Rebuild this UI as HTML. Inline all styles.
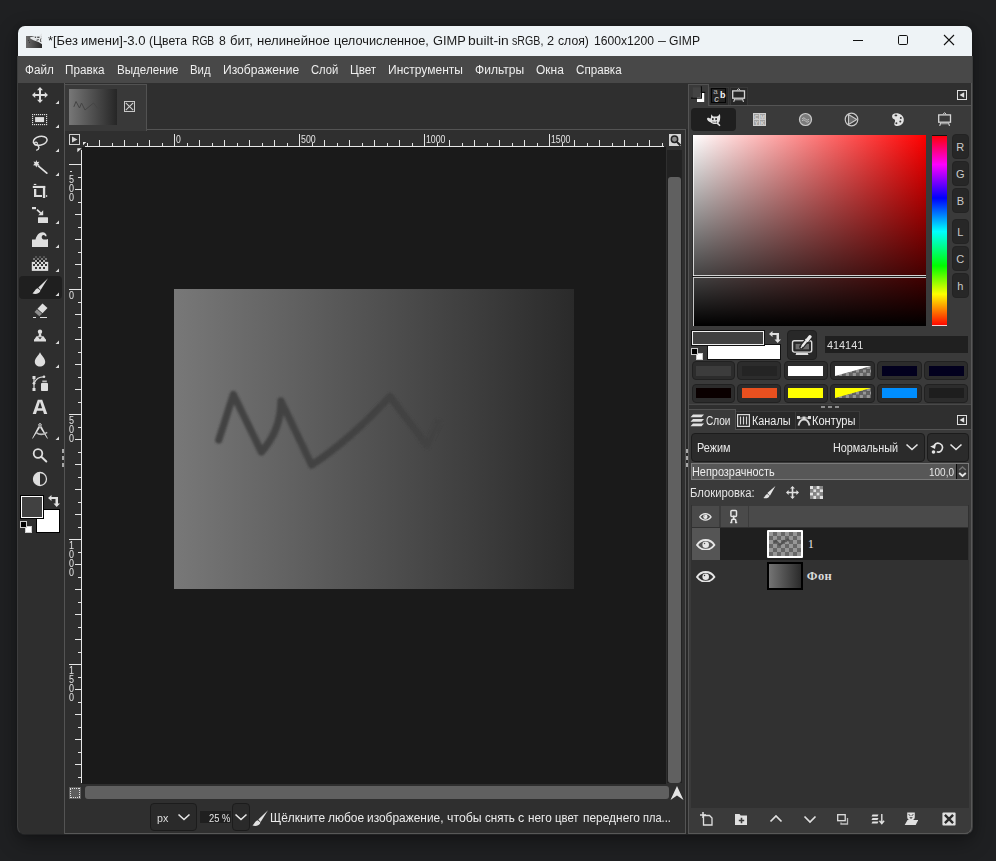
<!DOCTYPE html>
<html><head><meta charset="utf-8"><title>GIMP</title>
<style>
*{box-sizing:border-box;margin:0;padding:0}
html,body{width:996px;height:861px;overflow:hidden;background:#1f2022;font-family:"Liberation Sans",sans-serif;}
.abs,.t{position:absolute}
.t{white-space:nowrap;line-height:20px;height:20px}
#win{position:absolute;left:18px;top:26px;width:954px;height:808px;border-radius:7px;overflow:hidden;background:#303030;
 }
#shadow{position:absolute;left:18px;top:26px;width:954px;height:808px;border-radius:7px;box-shadow:0 7px 20px 2px rgba(0,0,0,.32),0 0 6px rgba(0,0,0,.22);}
#root{position:absolute;left:0;top:0;width:996px;height:861px}
#inner{position:absolute;left:-18px;top:-26px;width:996px;height:861px}
</style></head><body>
<div id="shadow"></div>
<div id="win"><div id="inner">

<div class="abs" style="left:18px;top:26px;width:954px;height:30px;background:#eef3f6"></div>
<div class="abs" style="left:18px;top:56px;width:954px;height:27px;background:#484848"></div>
<div class="abs" style="left:18px;top:83px;width:47px;height:751px;background:#2e2e2e"></div>
<div class="abs" style="left:64px;top:83px;width:1px;height:751px;background:#545454"></div>
<span class="t" style="left:47.90px;top:30.50px;font-size:12.5px;color:#1a1a1a;transform:scaleX(1.0329);transform-origin:0 50%;">*[Без</span>
<span class="t" style="left:81.10px;top:30.50px;font-size:12.5px;color:#1a1a1a;transform:scaleX(1.0500);transform-origin:0 50%;">имени]-3.0</span>
<span class="t" style="left:149.40px;top:30.50px;font-size:12.5px;color:#1a1a1a;transform:scaleX(0.9773);transform-origin:0 50%;">(Цвета</span>
<span class="t" style="left:192.30px;top:30.50px;font-size:12.5px;color:#1a1a1a;transform:scaleX(0.8196);transform-origin:0 50%;">RGB</span>
<span class="t" style="left:219.30px;top:30.50px;font-size:12.5px;color:#1a1a1a;transform:scaleX(0.9781);transform-origin:0 50%;">8</span>
<span class="t" style="left:229.80px;top:30.50px;font-size:12.5px;color:#1a1a1a;transform:scaleX(1.0431);transform-origin:0 50%;">бит,</span>
<span class="t" style="left:256.70px;top:30.50px;font-size:12.5px;color:#1a1a1a;transform:scaleX(1.0496);transform-origin:0 50%;">нелинейное</span>
<span class="t" style="left:333.50px;top:30.50px;font-size:12.5px;color:#1a1a1a;transform:scaleX(1.0222);transform-origin:0 50%;">целочисленное,</span>
<span class="t" style="left:432.60px;top:30.50px;font-size:12.5px;color:#1a1a1a;transform:scaleX(1.0267);transform-origin:0 50%;">GIMP</span>
<span class="t" style="left:467.70px;top:30.50px;font-size:12.5px;color:#1a1a1a;transform:scaleX(1.1080);transform-origin:0 50%;">built-in</span>
<span class="t" style="left:511.90px;top:30.50px;font-size:12.5px;color:#1a1a1a;transform:scaleX(0.8530);transform-origin:0 50%;">sRGB,</span>
<span class="t" style="left:547.30px;top:30.50px;font-size:12.5px;color:#1a1a1a;transform:scaleX(1.0213);transform-origin:0 50%;">2</span>
<span class="t" style="left:558.30px;top:30.50px;font-size:12.5px;color:#1a1a1a;transform:scaleX(0.9789);transform-origin:0 50%;">слоя)</span>
<span class="t" style="left:594.30px;top:30.50px;font-size:12.5px;color:#1a1a1a;transform:scaleX(0.9715);transform-origin:0 50%;">1600x1200</span>
<span class="t" style="left:657.80px;top:30.50px;font-size:12.5px;color:#1a1a1a;transform:scaleX(1.1364);transform-origin:0 50%;">–</span>
<span class="t" style="left:668.90px;top:30.50px;font-size:12.5px;color:#1a1a1a;transform:scaleX(0.9704);transform-origin:0 50%;">GIMP</span>
<svg class="abs" style="left:26px;top:33px" width="17" height="16" viewBox="0 0 17 16"><defs><linearGradient id="ig" x1="0" y1="0" x2="1" y2="0"><stop offset="0" stop-color="#6c6c6c"/><stop offset="1" stop-color="#2a2a2a"/></linearGradient></defs><rect x="0" y="3" width="16" height="12" fill="url(#ig)"/><path d="M3.800 4.400L8.800 3.100 13 3 15.800 .3 16 6V11.200L12.500 9 7.500 7.300 4.600 5.800z" fill="#e3e6e8"/><rect x="8.800" y="3.700" width="1.300" height="1.100" fill="#2a2a2a"/><rect x="11.200" y="3.700" width="2.300" height="1.100" fill="#2a2a2a"/><path d="M10.500 7.200l2.300-.6M15 5.500c-.8 1.200-.8 2.500 0 3.500" stroke="#2a2a2a" stroke-width=".9" fill="none"/><circle cx="2.500" cy="7.200" r=".5" fill="#2a2a2a"/><circle cx="3.500" cy="9.200" r=".5" fill="#2a2a2a"/></svg>
<svg class="abs" style="left:848px;top:30px" width="112" height="22" viewBox="0 0 112 22"><path d="M5 10.5h10" stroke="#111" stroke-width="1" fill="none"/><rect x="50.5" y="5.5" width="9" height="9" rx="1.2" stroke="#111" stroke-width="1" fill="none"/><path d="M96 5l10 10M106 5l-10 10" stroke="#111" stroke-width="1.1" fill="none"/></svg>
<span class="t" style="left:24.80px;top:60.00px;font-size:12.5px;color:#eeeeee;transform:scaleX(0.9372);transform-origin:0 50%;">Файл</span>
<span class="t" style="left:65.40px;top:60.00px;font-size:12.5px;color:#eeeeee;transform:scaleX(0.9379);transform-origin:0 50%;">Правка</span>
<span class="t" style="left:117.00px;top:60.00px;font-size:12.5px;color:#eeeeee;transform:scaleX(0.9285);transform-origin:0 50%;">Выделение</span>
<span class="t" style="left:190.20px;top:60.00px;font-size:12.5px;color:#eeeeee;transform:scaleX(0.9110);transform-origin:0 50%;">Вид</span>
<span class="t" style="left:223.30px;top:60.00px;font-size:12.5px;color:#eeeeee;transform:scaleX(0.9677);transform-origin:0 50%;">Изображение</span>
<span class="t" style="left:311.10px;top:60.00px;font-size:12.5px;color:#eeeeee;transform:scaleX(0.8982);transform-origin:0 50%;">Слой</span>
<span class="t" style="left:350.00px;top:60.00px;font-size:12.5px;color:#eeeeee;transform:scaleX(0.9354);transform-origin:0 50%;">Цвет</span>
<span class="t" style="left:388.30px;top:60.00px;font-size:12.5px;color:#eeeeee;transform:scaleX(0.9610);transform-origin:0 50%;">Инструменты</span>
<span class="t" style="left:475.10px;top:60.00px;font-size:12.5px;color:#eeeeee;transform:scaleX(0.9651);transform-origin:0 50%;">Фильтры</span>
<span class="t" style="left:536.20px;top:60.00px;font-size:12.5px;color:#eeeeee;transform:scaleX(0.9571);transform-origin:0 50%;">Окна</span>
<span class="t" style="left:575.80px;top:60.00px;font-size:12.5px;color:#eeeeee;transform:scaleX(0.9320);transform-origin:0 50%;">Справка</span>
<div class="abs" style="left:65px;top:83px;width:621px;height:751px;background:#2f2f2f"></div>
<div class="abs" style="left:146px;top:129px;width:540px;height:1px;background:#545454"></div>
<div class="abs" style="left:685px;top:129px;width:1px;height:705px;background:#545454"></div>
<div class="abs" style="left:65px;top:84px;width:82px;height:47px;background:#393939;border:1px solid #525252;border-bottom:none;border-left:none"></div>
<div class="abs" style="left:69px;top:89px;width:48px;height:36px;background:linear-gradient(90deg,#777 0%,#262626 100%)"></div>
<svg class="abs" style="left:69px;top:89px" width="48" height="36" viewBox="0 0 48 36"><path d="M5 17.5l2-5 3.5 6.5 2-5 3.5 7 8.5-7 4 5" stroke="#444" stroke-width="1" fill="none" stroke-linejoin="round" stroke-linecap="round"/></svg>
<svg class="abs" style="left:123px;top:100px" width="13" height="13" viewBox="0 0 13 13"><rect x="1.5" y="1.5" width="10" height="10" fill="none" stroke="#c8c8c8" stroke-width="1"/><path d="M2.800 2.800l7.400 7.400M10.200 2.800l-7.400 7.400" stroke="#d0d0d0" stroke-width="1.100" fill="none"/></svg>
<div class="abs" style="left:82px;top:147px;width:584px;height:637px;background:#1a1a1a"></div>
<div class="abs" style="left:174px;top:289px;width:400px;height:300px;background:linear-gradient(90deg,#787878 0%,#2a2a2a 100%)"></div>
<svg class="abs" style="left:174px;top:289px" width="400" height="300" viewBox="0 0 400 300"><defs><filter id="bl" x="-10%" y="-10%" width="120%" height="120%"><feGaussianBlur stdDeviation="1.3"/></filter></defs><path d="M44.800 151 L59.400 105.500 L87.400 163 Q107 141 107 112 L137.700 176 Q176 151 216 107.500 L253 156.500 L264 134" stroke="#434343" stroke-width="7.300" fill="none" stroke-linejoin="round" stroke-linecap="round" filter="url(#bl)"/></svg>
<svg class="abs" style="left:65px;top:130px" width="622" height="18" viewBox="65 130 622 18" shape-rendering="crispEdges"><rect x="85" y="146" width="579" height="1" fill="#e6e6e6"/><rect x="87" y="143" width="1" height="3" fill="#e6e6e6"/><rect x="99" y="140" width="1" height="6" fill="#e6e6e6"/><rect x="112" y="143" width="1" height="3" fill="#e6e6e6"/><rect x="124" y="140" width="1" height="6" fill="#e6e6e6"/><rect x="137" y="143" width="1" height="3" fill="#e6e6e6"/><rect x="149" y="140" width="1" height="6" fill="#e6e6e6"/><rect x="162" y="143" width="1" height="3" fill="#e6e6e6"/><rect x="174" y="134" width="1" height="12" fill="#e6e6e6"/><rect x="187" y="143" width="1" height="3" fill="#e6e6e6"/><rect x="199" y="140" width="1" height="6" fill="#e6e6e6"/><rect x="212" y="143" width="1" height="3" fill="#e6e6e6"/><rect x="224" y="140" width="1" height="6" fill="#e6e6e6"/><rect x="237" y="143" width="1" height="3" fill="#e6e6e6"/><rect x="249" y="140" width="1" height="6" fill="#e6e6e6"/><rect x="262" y="143" width="1" height="3" fill="#e6e6e6"/><rect x="274" y="140" width="1" height="6" fill="#e6e6e6"/><rect x="287" y="143" width="1" height="3" fill="#e6e6e6"/><rect x="299" y="134" width="1" height="12" fill="#e6e6e6"/><rect x="312" y="143" width="1" height="3" fill="#e6e6e6"/><rect x="324" y="140" width="1" height="6" fill="#e6e6e6"/><rect x="337" y="143" width="1" height="3" fill="#e6e6e6"/><rect x="349" y="140" width="1" height="6" fill="#e6e6e6"/><rect x="362" y="143" width="1" height="3" fill="#e6e6e6"/><rect x="374" y="140" width="1" height="6" fill="#e6e6e6"/><rect x="387" y="143" width="1" height="3" fill="#e6e6e6"/><rect x="399" y="140" width="1" height="6" fill="#e6e6e6"/><rect x="412" y="143" width="1" height="3" fill="#e6e6e6"/><rect x="424" y="134" width="1" height="12" fill="#e6e6e6"/><rect x="437" y="143" width="1" height="3" fill="#e6e6e6"/><rect x="449" y="140" width="1" height="6" fill="#e6e6e6"/><rect x="462" y="143" width="1" height="3" fill="#e6e6e6"/><rect x="474" y="140" width="1" height="6" fill="#e6e6e6"/><rect x="487" y="143" width="1" height="3" fill="#e6e6e6"/><rect x="499" y="140" width="1" height="6" fill="#e6e6e6"/><rect x="512" y="143" width="1" height="3" fill="#e6e6e6"/><rect x="524" y="140" width="1" height="6" fill="#e6e6e6"/><rect x="537" y="143" width="1" height="3" fill="#e6e6e6"/><rect x="549" y="134" width="1" height="12" fill="#e6e6e6"/><rect x="562" y="143" width="1" height="3" fill="#e6e6e6"/><rect x="574" y="140" width="1" height="6" fill="#e6e6e6"/><rect x="587" y="143" width="1" height="3" fill="#e6e6e6"/><rect x="599" y="140" width="1" height="6" fill="#e6e6e6"/><rect x="612" y="143" width="1" height="3" fill="#e6e6e6"/><rect x="624" y="140" width="1" height="6" fill="#e6e6e6"/><rect x="637" y="143" width="1" height="3" fill="#e6e6e6"/><rect x="649" y="140" width="1" height="6" fill="#e6e6e6"/><rect x="662" y="143" width="1" height="3" fill="#e6e6e6"/></svg>
<span class="t" style="left:176.00px;top:128.70px;font-size:10.5px;color:#e4e4e4;transform:scaleX(0.8220);transform-origin:0 50%;">0</span>
<span class="t" style="left:301.00px;top:128.70px;font-size:10.5px;color:#e4e4e4;transform:scaleX(0.8391);transform-origin:0 50%;">500</span>
<span class="t" style="left:426.00px;top:128.70px;font-size:10.5px;color:#e4e4e4;transform:scaleX(0.8348);transform-origin:0 50%;">1000</span>
<span class="t" style="left:551.00px;top:128.70px;font-size:10.5px;color:#e4e4e4;transform:scaleX(0.8348);transform-origin:0 50%;">1500</span>
<svg class="abs" style="left:65px;top:130px" width="18" height="660" viewBox="65 130 18 660" shape-rendering="crispEdges"><rect x="81" y="150" width="1" height="633" fill="#e6e6e6"/><rect x="69" y="164" width="12" height="1" fill="#e6e6e6"/><rect x="78" y="177" width="3" height="1" fill="#e6e6e6"/><rect x="75" y="189" width="6" height="1" fill="#e6e6e6"/><rect x="78" y="202" width="3" height="1" fill="#e6e6e6"/><rect x="75" y="214" width="6" height="1" fill="#e6e6e6"/><rect x="78" y="227" width="3" height="1" fill="#e6e6e6"/><rect x="75" y="239" width="6" height="1" fill="#e6e6e6"/><rect x="78" y="252" width="3" height="1" fill="#e6e6e6"/><rect x="75" y="264" width="6" height="1" fill="#e6e6e6"/><rect x="78" y="277" width="3" height="1" fill="#e6e6e6"/><rect x="69" y="289" width="12" height="1" fill="#e6e6e6"/><rect x="78" y="302" width="3" height="1" fill="#e6e6e6"/><rect x="75" y="314" width="6" height="1" fill="#e6e6e6"/><rect x="78" y="327" width="3" height="1" fill="#e6e6e6"/><rect x="75" y="339" width="6" height="1" fill="#e6e6e6"/><rect x="78" y="352" width="3" height="1" fill="#e6e6e6"/><rect x="75" y="364" width="6" height="1" fill="#e6e6e6"/><rect x="78" y="377" width="3" height="1" fill="#e6e6e6"/><rect x="75" y="389" width="6" height="1" fill="#e6e6e6"/><rect x="78" y="402" width="3" height="1" fill="#e6e6e6"/><rect x="69" y="414" width="12" height="1" fill="#e6e6e6"/><rect x="78" y="427" width="3" height="1" fill="#e6e6e6"/><rect x="75" y="439" width="6" height="1" fill="#e6e6e6"/><rect x="78" y="452" width="3" height="1" fill="#e6e6e6"/><rect x="75" y="464" width="6" height="1" fill="#e6e6e6"/><rect x="78" y="477" width="3" height="1" fill="#e6e6e6"/><rect x="75" y="489" width="6" height="1" fill="#e6e6e6"/><rect x="78" y="502" width="3" height="1" fill="#e6e6e6"/><rect x="75" y="514" width="6" height="1" fill="#e6e6e6"/><rect x="78" y="527" width="3" height="1" fill="#e6e6e6"/><rect x="69" y="539" width="12" height="1" fill="#e6e6e6"/><rect x="78" y="552" width="3" height="1" fill="#e6e6e6"/><rect x="75" y="564" width="6" height="1" fill="#e6e6e6"/><rect x="78" y="577" width="3" height="1" fill="#e6e6e6"/><rect x="75" y="589" width="6" height="1" fill="#e6e6e6"/><rect x="78" y="602" width="3" height="1" fill="#e6e6e6"/><rect x="75" y="614" width="6" height="1" fill="#e6e6e6"/><rect x="78" y="627" width="3" height="1" fill="#e6e6e6"/><rect x="75" y="639" width="6" height="1" fill="#e6e6e6"/><rect x="78" y="652" width="3" height="1" fill="#e6e6e6"/><rect x="69" y="664" width="12" height="1" fill="#e6e6e6"/><rect x="78" y="677" width="3" height="1" fill="#e6e6e6"/><rect x="75" y="689" width="6" height="1" fill="#e6e6e6"/><rect x="78" y="702" width="3" height="1" fill="#e6e6e6"/><rect x="75" y="714" width="6" height="1" fill="#e6e6e6"/><rect x="78" y="727" width="3" height="1" fill="#e6e6e6"/><rect x="75" y="739" width="6" height="1" fill="#e6e6e6"/><rect x="78" y="752" width="3" height="1" fill="#e6e6e6"/><rect x="75" y="764" width="6" height="1" fill="#e6e6e6"/><rect x="78" y="777" width="3" height="1" fill="#e6e6e6"/></svg>
<div class="abs" style="left:70px;top:170.5px;width:2px;height:1px;background:#d8d8d8"></div>
<span class="t" style="left:69.00px;top:168.80px;font-size:10.5px;color:#e4e4e4;transform:scaleX(0.8562);transform-origin:0 50%;">5</span>
<span class="t" style="left:69.00px;top:177.70px;font-size:10.5px;color:#e4e4e4;transform:scaleX(0.8562);transform-origin:0 50%;">0</span>
<span class="t" style="left:69.00px;top:186.60px;font-size:10.5px;color:#e4e4e4;transform:scaleX(0.8562);transform-origin:0 50%;">0</span>
<span class="t" style="left:69.00px;top:284.90px;font-size:10.5px;color:#e4e4e4;transform:scaleX(0.8562);transform-origin:0 50%;">0</span>
<span class="t" style="left:69.00px;top:409.90px;font-size:10.5px;color:#e4e4e4;transform:scaleX(0.8562);transform-origin:0 50%;">5</span>
<span class="t" style="left:69.00px;top:418.80px;font-size:10.5px;color:#e4e4e4;transform:scaleX(0.8562);transform-origin:0 50%;">0</span>
<span class="t" style="left:69.00px;top:427.70px;font-size:10.5px;color:#e4e4e4;transform:scaleX(0.8562);transform-origin:0 50%;">0</span>
<span class="t" style="left:69.00px;top:534.90px;font-size:10.5px;color:#e4e4e4;transform:scaleX(0.8562);transform-origin:0 50%;">1</span>
<span class="t" style="left:69.00px;top:543.80px;font-size:10.5px;color:#e4e4e4;transform:scaleX(0.8562);transform-origin:0 50%;">0</span>
<span class="t" style="left:69.00px;top:552.70px;font-size:10.5px;color:#e4e4e4;transform:scaleX(0.8562);transform-origin:0 50%;">0</span>
<span class="t" style="left:69.00px;top:561.60px;font-size:10.5px;color:#e4e4e4;transform:scaleX(0.8562);transform-origin:0 50%;">0</span>
<span class="t" style="left:69.00px;top:659.90px;font-size:10.5px;color:#e4e4e4;transform:scaleX(0.8562);transform-origin:0 50%;">1</span>
<span class="t" style="left:69.00px;top:668.80px;font-size:10.5px;color:#e4e4e4;transform:scaleX(0.8562);transform-origin:0 50%;">5</span>
<span class="t" style="left:69.00px;top:677.70px;font-size:10.5px;color:#e4e4e4;transform:scaleX(0.8562);transform-origin:0 50%;">0</span>
<span class="t" style="left:69.00px;top:686.60px;font-size:10.5px;color:#e4e4e4;transform:scaleX(0.8562);transform-origin:0 50%;">0</span>
<svg class="abs" style="left:77px;top:148px" width="5" height="5" viewBox="0 0 5 5"><path d="M.3 .3h4.400L.3 4.200z" fill="#e6e6e6"/></svg>
<svg class="abs" style="left:83px;top:142px" width="4" height="4" viewBox="0 0 4 4"><path d="M0 0h3.300L0 3.300z" fill="#e6e6e6"/></svg>
<svg class="abs" style="left:68px;top:133px" width="13" height="13" viewBox="0 0 13 13"><rect x="1.5" y="1.5" width="10" height="10" fill="none" stroke="#d0d0d0"/><path d="M4 3.5v6l5.5-3z" fill="#d0d0d0"/></svg>
<div class="abs" style="left:669px;top:134px;width:12px;height:12px;background:#d6d6d6"></div>
<svg class="abs" style="left:669px;top:134px" width="13" height="13" viewBox="0 0 13 13"><circle cx="5.5" cy="5.3" r="3.2" fill="#8a8a8a" stroke="#222" stroke-width="1.5"/><path d="M8 8l3.5 3.5" stroke="#222" stroke-width="2"/></svg>
<div class="abs" style="left:667px;top:150px;width:15px;height:633px;background:#222"></div>
<div class="abs" style="left:668px;top:177px;width:13px;height:606px;background:#606060;border-radius:3px"></div>
<div class="abs" style="left:85px;top:786px;width:584px;height:13px;background:#606060;border-radius:3px"></div>
<svg class="abs" style="left:69px;top:787px" width="12" height="12" viewBox="0 0 12 12" shape-rendering="crispEdges"><rect x="0" y="0" width="12" height="12" fill="#5e5e5e"/><rect x="1" y="1" width="1" height="1" fill="#e0e0e0"/><rect x="2" y="10" width="1" height="1" fill="#e0e0e0"/><rect x="1" y="2" width="1" height="1" fill="#e0e0e0"/><rect x="10" y="1" width="1" height="1" fill="#e0e0e0"/><rect x="3" y="1" width="1" height="1" fill="#e0e0e0"/><rect x="4" y="10" width="1" height="1" fill="#e0e0e0"/><rect x="1" y="4" width="1" height="1" fill="#e0e0e0"/><rect x="10" y="3" width="1" height="1" fill="#e0e0e0"/><rect x="5" y="1" width="1" height="1" fill="#e0e0e0"/><rect x="6" y="10" width="1" height="1" fill="#e0e0e0"/><rect x="1" y="6" width="1" height="1" fill="#e0e0e0"/><rect x="10" y="5" width="1" height="1" fill="#e0e0e0"/><rect x="7" y="1" width="1" height="1" fill="#e0e0e0"/><rect x="8" y="10" width="1" height="1" fill="#e0e0e0"/><rect x="1" y="8" width="1" height="1" fill="#e0e0e0"/><rect x="10" y="7" width="1" height="1" fill="#e0e0e0"/><rect x="9" y="1" width="1" height="1" fill="#e0e0e0"/><rect x="10" y="10" width="1" height="1" fill="#e0e0e0"/><rect x="1" y="10" width="1" height="1" fill="#e0e0e0"/><rect x="10" y="9" width="1" height="1" fill="#e0e0e0"/></svg>
<svg class="abs" style="left:669px;top:785px" width="16" height="16" viewBox="0 0 16 16"><path d="M8 1l6.5 14L8 10.5 1.5 15z" fill="#e4e4e4"/></svg>
<div class="abs" style="left:150px;top:803px;width:47px;height:28px;background:#2a2a2a;border:1px solid #1c1c1c;border-radius:4px"></div>
<span class="t" style="left:157.30px;top:808.00px;font-size:11px;color:#dedede;transform:scaleX(0.9727);transform-origin:0 50%;">px</span>
<svg class="abs" style="left:177px;top:812px" width="14" height="10" viewBox="0 0 14 10"><path d="M1.5 2.5l5.5 5 5.5-5" stroke="#e6e6e6" stroke-width="1.6" fill="none"/></svg>
<div class="abs" style="left:200px;top:811px;width:31px;height:12px;background:#1f1f1f"></div>
<span class="t" style="left:208.70px;top:807.50px;font-size:11px;color:#e6e6e6;transform:scaleX(0.8495);transform-origin:0 50%;">25 %</span>
<div class="abs" style="left:232px;top:803px;width:18px;height:28px;background:#2a2a2a;border:1px solid #1c1c1c;border-radius:4px"></div>
<svg class="abs" style="left:234px;top:812px" width="14" height="10" viewBox="0 0 14 10"><path d="M1.5 2.5l5.5 5 5.5-5" stroke="#e6e6e6" stroke-width="1.6" fill="none"/></svg>
<svg class="abs" style="left:252.200px;top:810.800px;overflow:visible" width="16" height="16" viewBox="0 0 16 16"><path d="M16 -0.800L6.300 8.600l2.300 2.300z" fill="#e2e2e2"/><path d="M5.800 9.300c-2.600.3-2.800 3-5.300 5.200 3 1 7.400.2 8-3z" fill="#e2e2e2"/></svg>
<span class="t" style="left:270.00px;top:807.50px;font-size:12.5px;color:#ececec;transform:scaleX(0.9541);transform-origin:0 50%;">Щёлкните</span>
<span class="t" style="left:327.70px;top:807.50px;font-size:12.5px;color:#ececec;transform:scaleX(0.9567);transform-origin:0 50%;">любое</span>
<span class="t" style="left:366.90px;top:807.50px;font-size:12.5px;color:#ececec;transform:scaleX(0.9537);transform-origin:0 50%;">изображение,</span>
<span class="t" style="left:447.40px;top:807.50px;font-size:12.5px;color:#ececec;transform:scaleX(0.9860);transform-origin:0 50%;">чтобы</span>
<span class="t" style="left:485.30px;top:807.50px;font-size:12.5px;color:#ececec;transform:scaleX(0.9297);transform-origin:0 50%;">снять</span>
<span class="t" style="left:518.40px;top:807.50px;font-size:12.5px;color:#ececec;transform:scaleX(0.9920);transform-origin:0 50%;">с</span>
<span class="t" style="left:528.00px;top:807.50px;font-size:12.5px;color:#ececec;transform:scaleX(0.9445);transform-origin:0 50%;">него</span>
<span class="t" style="left:555.30px;top:807.50px;font-size:12.5px;color:#ececec;transform:scaleX(0.9066);transform-origin:0 50%;">цвет</span>
<span class="t" style="left:582.50px;top:807.50px;font-size:12.5px;color:#ececec;transform:scaleX(0.9542);transform-origin:0 50%;">переднего</span>
<span class="t" style="left:643.30px;top:807.50px;font-size:12.5px;color:#ececec;transform:scaleX(0.8844);transform-origin:0 50%;">пла...</span>
<div class="abs" style="left:19px;top:276px;width:43px;height:23px;background:#1f1f1f;border-radius:4px"></div>
<svg class="abs" style="left:32px;top:87px;overflow:visible" width="16" height="16" viewBox="0 0 16 16"><path d="M8 0l3 3.2H9v3.800h3.800V5L16 8l-3.200 3V9H9v3.800h2L8 16l-3-3.200h2V9H3.200v2L0 8l3.200-3v2H7V3.200H5z" fill="#dedede"/></svg>
<svg class="abs" style="left:32px;top:111px;overflow:visible" width="16" height="16" viewBox="0 0 16 16"><rect x="0" y="3" width="1.150" height="1.150" fill="#dedede"/><rect x="0" y="13" width="1.150" height="1.150" fill="#dedede"/><rect x="2" y="3" width="1.150" height="1.150" fill="#dedede"/><rect x="2" y="13" width="1.150" height="1.150" fill="#dedede"/><rect x="4" y="3" width="1.150" height="1.150" fill="#dedede"/><rect x="4" y="13" width="1.150" height="1.150" fill="#dedede"/><rect x="6" y="3" width="1.150" height="1.150" fill="#dedede"/><rect x="6" y="13" width="1.150" height="1.150" fill="#dedede"/><rect x="8" y="3" width="1.150" height="1.150" fill="#dedede"/><rect x="8" y="13" width="1.150" height="1.150" fill="#dedede"/><rect x="10" y="3" width="1.150" height="1.150" fill="#dedede"/><rect x="10" y="13" width="1.150" height="1.150" fill="#dedede"/><rect x="12" y="3" width="1.150" height="1.150" fill="#dedede"/><rect x="12" y="13" width="1.150" height="1.150" fill="#dedede"/><rect x="14" y="3" width="1.150" height="1.150" fill="#dedede"/><rect x="14" y="13" width="1.150" height="1.150" fill="#dedede"/><rect x="0" y="5" width="1.150" height="1.150" fill="#dedede"/><rect x="14" y="5" width="1.150" height="1.150" fill="#dedede"/><rect x="0" y="7" width="1.150" height="1.150" fill="#dedede"/><rect x="14" y="7" width="1.150" height="1.150" fill="#dedede"/><rect x="0" y="9" width="1.150" height="1.150" fill="#dedede"/><rect x="14" y="9" width="1.150" height="1.150" fill="#dedede"/><rect x="0" y="11" width="1.150" height="1.150" fill="#dedede"/><rect x="14" y="11" width="1.150" height="1.150" fill="#dedede"/><rect x="3.100" y="6.100" width="9" height="5" fill="#dedede"/></svg>
<svg class="abs" style="left:32px;top:135px;overflow:visible" width="16" height="16" viewBox="0 0 16 16"><ellipse cx="8.200" cy="5.800" rx="7" ry="4.300" transform="rotate(-12 8.200 5.800)" fill="none" stroke="#dedede" stroke-width="1.500"/><circle cx="3.900" cy="8.700" r="1.500" fill="none" stroke="#dedede" stroke-width="1.200"/><path d="M5 10.100c2.600 1.200 2.800 4.200-.8 5.300" fill="none" stroke="#dedede" stroke-width="1.500"/></svg>
<svg class="abs" style="left:32px;top:159px;overflow:visible" width="16" height="16" viewBox="0 0 16 16"><g transform="translate(0,.8)"><path d="M4.200 0.300l1 2 2.200-.4-1.200 1.900 1.400 1.800-2.300.1-1 2.100-.9-2.100-2.300-.2 1.500-1.700-1.100-2 2.200.5z" fill="#dedede"/><path d="M6.500 6.300L14.800 13.300" stroke="#dedede" stroke-width="1.800" stroke-linecap="round"/></g></svg>
<svg class="abs" style="left:32px;top:183px;overflow:visible" width="16" height="16" viewBox="0 0 16 16"><rect x="1.800" y="0.900" width="2.500" height="1.100" fill="#dedede"/><rect x="0.800" y="2.900" width="12.400" height="2.100" fill="#dedede"/><rect x="10.900" y="3" width="2.300" height="12" fill="#dedede"/><rect x="2" y="6" width="2.300" height="8" fill="#dedede"/><rect x="2" y="12" width="8" height="2" fill="#dedede"/><rect x="13.900" y="12" width="1.300" height="2" fill="#dedede" opacity=".85"/></svg>
<svg class="abs" style="left:32px;top:207px;overflow:visible" width="16" height="16" viewBox="0 0 16 16"><rect x="0" y="0" width="4" height="2.200" fill="#dedede"/><path d="M5 2.600l4.500 4.200" stroke="#dedede" stroke-width="1.700"/><path d="M11.200 8.200V3.300L6.300 8.200z" fill="#dedede"/><rect x="6" y="10.200" width="10" height="5.800" rx=".5" fill="#dedede"/></svg>
<svg class="abs" style="left:32px;top:232px;overflow:visible" width="16" height="16" viewBox="0 0 16 16"><path d="M0 15V7.500H3.500C4.500 3.500 7 .3 10.500 .3 13 .3 14.600 2 14.600 4.200H13.200C12.600 2.900 10.800 2.700 10 3.900 9.200 5.300 10 6.900 11.500 7.400 12.900 7.800 14.600 7.600 16 7V15z" fill="#dedede"/></svg>
<svg class="abs" style="left:32px;top:256px;overflow:visible" width="16" height="16" viewBox="0 0 16 16"><rect x="3" y="0" width="2" height="2" fill="#dedede" opacity=".22"/><rect x="7" y="0" width="2" height="2" fill="#dedede" opacity=".22"/><rect x="11" y="0" width="2" height="2" fill="#dedede" opacity=".22"/><rect x="1" y="2" width="2" height="2" fill="#dedede" opacity=".42"/><rect x="5" y="2" width="2" height="2" fill="#dedede" opacity=".42"/><rect x="9" y="2" width="2" height="2" fill="#dedede" opacity=".42"/><rect x="13" y="2" width="2" height="2" fill="#dedede" opacity=".42"/><rect x="3" y="4" width="2" height="2" fill="#dedede" opacity=".7"/><rect x="7" y="4" width="2" height="2" fill="#dedede" opacity=".7"/><rect x="11" y="4" width="2" height="2" fill="#dedede" opacity=".7"/><rect x="5" y="4" width="2" height="2" fill="#161616"/><rect x="9" y="4" width="2" height="2" fill="#161616"/><rect x="-0.2" y="5.900" width="16.400" height="9" fill="#dedede"/><rect x="3.1" y="6.100" width="1.800" height="1.800" fill="#111"/><rect x="7.1" y="6.100" width="1.800" height="1.800" fill="#111"/><rect x="11.1" y="6.100" width="1.800" height="1.800" fill="#111"/><rect x="1.1" y="8.100" width="1.800" height="1.800" fill="#111"/><rect x="5.1" y="8.100" width="1.800" height="1.800" fill="#111"/><rect x="9.1" y="8.100" width="1.800" height="1.800" fill="#111"/><rect x="13.1" y="8.100" width="1.800" height="1.800" fill="#111"/><rect x="3.1" y="11.100" width="1.800" height="1.800" fill="#111"/><rect x="7.1" y="11.100" width="1.800" height="1.800" fill="#111"/><rect x="11.1" y="11.100" width="1.800" height="1.800" fill="#111"/></svg>
<svg class="abs" style="left:32px;top:279px;overflow:visible" width="16" height="16" viewBox="0 0 16 16"><path d="M16 -0.800L6.300 8.600l2.300 2.300z" fill="#dedede"/><path d="M5.800 9.300c-2.600.3-2.800 3-5.300 5.200 3 1 7.400.2 8-3z" fill="#dedede"/></svg>
<svg class="abs" style="left:32px;top:303px;overflow:visible" width="16" height="16" viewBox="0 0 16 16"><path d="M10.500 0.500l5 4.500-5 5.300-5-4.500z" fill="#dedede"/><path d="M5 6.300l5 4.500-2.600 2.500-4.900-4.300z" fill="#8d8d8d"/><rect x="1" y="14" width="3" height="1" fill="#dedede"/><rect x="8" y="14" width="7" height="1" fill="#dedede"/></svg>
<svg class="abs" style="left:32px;top:327px;overflow:visible" width="16" height="16" viewBox="0 0 16 16"><circle cx="8" cy="4.800" r="2.200" fill="#dedede"/><path d="M7 6.500h2l.5 3h-3z" fill="#dedede"/><path d="M2 13L4.500 9.300h7L14 13z" fill="#dedede"/><rect x="2" y="12.500" width="12" height="2" fill="#dedede"/><path d="M6.200 10.200h3.600L8 12.300z" fill="#2a2a2a"/></svg>
<svg class="abs" style="left:32px;top:351px;overflow:visible" width="16" height="16" viewBox="0 0 16 16"><path d="M8 1.200C9.500 4.700 13.200 7 13.200 10.700 13.200 13.500 10.800 15.600 8 15.600s-5.200-2.100-5.200-4.900C2.800 7 6.500 4.700 8 1.200z" fill="#dedede"/></svg>
<svg class="abs" style="left:32px;top:375px;overflow:visible" width="16" height="16" viewBox="0 0 16 16"><rect x="0.500" y="1" width="3" height="3" fill="#dedede"/><rect x="0.500" y="13" width="3" height="3" fill="#dedede"/><path d="M2 3v11" stroke="#dedede" stroke-width="1.200"/><circle cx="2" cy="8.300" r="1.400" fill="#dedede"/><path d="M2.500 7.500C4 4 7 1.800 11.500 1.800" fill="none" stroke="#dedede" stroke-width="1.200"/><circle cx="12" cy="1.800" r="1.300" fill="#dedede"/><rect x="9" y="8" width="7" height="8" rx=".8" fill="#dedede"/><rect x="10.300" y="5.500" width="4.500" height="1.800" fill="#dedede" opacity=".8"/></svg>
<svg class="abs" style="left:32px;top:399px;overflow:visible" width="16" height="16" viewBox="0 0 16 16"><path d="M5.800 0.800h4.400L15.300 15H12l-1-3.200H5L4 15H0.700zM5.900 9.300h4.200L8 2.800z" fill="#dedede"/></svg>
<svg class="abs" style="left:32px;top:423px;overflow:visible" width="16" height="16" viewBox="0 0 16 16"><circle cx="8" cy="1.900" r="1.250" fill="none" stroke="#dedede" stroke-width="1"/><path d="M6.400 3.200l2 .9L.7 15.800.2 15.300zM9.600 3.200l-2 .9 7.700 11.700.5-.5z" fill="#dedede"/><path d="M4.300 9.700c2.800 2.100 7.200 2.100 10.900-.4" stroke="#bdbdbd" stroke-width="1.600" fill="none"/></svg>
<svg class="abs" style="left:32px;top:447px;overflow:visible" width="16" height="16" viewBox="0 0 16 16"><circle cx="6" cy="6.500" r="4.300" fill="none" stroke="#dedede" stroke-width="1.800"/><path d="M9.300 9.800l5 4.700" stroke="#dedede" stroke-width="2" stroke-linecap="round"/></svg>
<svg class="abs" style="left:32px;top:471px;overflow:visible" width="16" height="16" viewBox="0 0 16 16"><circle cx="8" cy="8" r="6.500" fill="none" stroke="#dedede" stroke-width="1.300"/><path d="M8 1.500a6.500 6.500 0 0 0 0 13z" fill="#dedede"/></svg>
<svg class="abs" style="left:55.200px;top:100px" width="4" height="4" viewBox="0 0 4 4"><path d="M4 0.500V4H0.500z" fill="#dadada"/></svg>
<svg class="abs" style="left:55.200px;top:124px" width="4" height="4" viewBox="0 0 4 4"><path d="M4 0.500V4H0.500z" fill="#dadada"/></svg>
<svg class="abs" style="left:55.200px;top:148px" width="4" height="4" viewBox="0 0 4 4"><path d="M4 0.500V4H0.500z" fill="#dadada"/></svg>
<svg class="abs" style="left:55.200px;top:172px" width="4" height="4" viewBox="0 0 4 4"><path d="M4 0.500V4H0.500z" fill="#dadada"/></svg>
<svg class="abs" style="left:55.200px;top:220px" width="4" height="4" viewBox="0 0 4 4"><path d="M4 0.500V4H0.500z" fill="#dadada"/></svg>
<svg class="abs" style="left:55.200px;top:244px" width="4" height="4" viewBox="0 0 4 4"><path d="M4 0.500V4H0.500z" fill="#dadada"/></svg>
<svg class="abs" style="left:55.200px;top:268px" width="4" height="4" viewBox="0 0 4 4"><path d="M4 0.500V4H0.500z" fill="#dadada"/></svg>
<svg class="abs" style="left:55.200px;top:292px" width="4" height="4" viewBox="0 0 4 4"><path d="M4 0.500V4H0.500z" fill="#dadada"/></svg>
<svg class="abs" style="left:55.200px;top:340px" width="4" height="4" viewBox="0 0 4 4"><path d="M4 0.500V4H0.500z" fill="#dadada"/></svg>
<svg class="abs" style="left:55.200px;top:364px" width="4" height="4" viewBox="0 0 4 4"><path d="M4 0.500V4H0.500z" fill="#dadada"/></svg>
<svg class="abs" style="left:55.200px;top:436px" width="4" height="4" viewBox="0 0 4 4"><path d="M4 0.500V4H0.500z" fill="#dadada"/></svg>
<div class="abs" style="left:62px;top:449px;width:2px;height:4px;background:#a8a8a8"></div>
<div class="abs" style="left:62px;top:456px;width:2px;height:4px;background:#a8a8a8"></div>
<div class="abs" style="left:62px;top:463px;width:2px;height:4px;background:#a8a8a8"></div>
<div class="abs" style="left:36px;top:509px;width:24px;height:24px;background:#fff;border:1px solid #000"></div>
<div class="abs" style="left:20px;top:495px;width:24px;height:24px;background:#414141;border:1px solid #000;box-shadow:inset 0 0 0 1px #fff"></div>
<svg class="abs" style="left:48px;top:495px" width="12" height="12" viewBox="0 0 12 12"><path d="M3.500 0L0 3l3.500 3V4h4v4.500h-2L8.700 12 12 8.500h-2V2H3.500z" fill="#e0e0e0"/></svg>
<div class="abs" style="left:25px;top:526px;width:7px;height:7px;background:#fff;border:1px solid #ccc"></div>
<div class="abs" style="left:20px;top:521px;width:7px;height:7px;background:#000;border:1px solid #ccc"></div>
<div class="abs" style="left:686px;top:83px;width:286px;height:751px;background:#2f2f2f"></div>
<div class="abs" style="left:689px;top:105px;width:283px;height:729px;background:#3a3a3a"></div>
<div class="abs" style="left:688px;top:84px;width:1px;height:750px;background:#545454"></div>
<div class="abs" style="left:709px;top:105px;width:263px;height:1px;background:#545454"></div>
<div class="abs" style="left:686px;top:129px;width:2px;height:705px;background:#292929"></div>
<div class="abs" style="left:686px;top:449px;width:2px;height:4px;background:#a8a8a8"></div>
<div class="abs" style="left:686px;top:456px;width:2px;height:4px;background:#a8a8a8"></div>
<div class="abs" style="left:686px;top:463px;width:2px;height:4px;background:#a8a8a8"></div>
<div class="abs" style="left:689px;top:84px;width:20px;height:22px;background:#3a3a3a;border-top:1px solid #525252;border-right:1px solid #525252"></div>
<svg class="abs" style="left:690px;top:85px" width="16" height="18" viewBox="0 0 16 18"><rect x="7" y="7.900" width="7.200" height="9.100" fill="#fff"/><path d="M11.400 1.200V13.800M1 13.200H12M11 7.300H15.200" stroke="#0c0c0c" stroke-width="1.200" fill="none"/><rect x="2.800" y="2.400" width="8" height="10.200" fill="#434343"/></svg>
<div class="abs" style="left:709px;top:87px;width:20px;height:18px;background:#272727;border:1px solid #383838;border-bottom:none"></div>
<div class="abs" style="left:711px;top:88px;width:15px;height:15px;background:#232323;border:1px solid #050505"></div>
<span class="t" style="left:713.20px;top:81.80px;font-size:8px;color:#b4b4b4;">a</span>
<span class="t" style="left:720.00px;top:84.50px;font-size:9px;color:#f4f4f4;font-weight:bold;">b</span>
<span class="t" style="left:714.30px;top:88.50px;font-size:9.5px;color:#cfcfcf;font-style:italic;">c</span>
<div class="abs" style="left:730px;top:87px;width:18px;height:18px;background:#272727;border:1px solid #383838;border-bottom:none"></div>
<svg class="abs" style="left:731px;top:87px" width="15" height="15" viewBox="0 0 15 15"><rect x="1.700" y="3.900" width="11.800" height="7.300" fill="none" stroke="#d6d6d6" stroke-width="1.300"/><path d="M6 3.300l1.600-1.700 1.600 1.700" stroke="#d6d6d6" stroke-width="1" fill="none"/><rect x="3.400" y="12.100" width="8.400" height="1.200" fill="#a0a0a0"/><path d="M3.600 12.100l-.9 2.800M11.600 12.100l.9 2.800" stroke="#d6d6d6" stroke-width="1.100" fill="none"/></svg>
<svg class="abs" style="left:957px;top:90px" width="10" height="10" viewBox="0 0 10 10"><rect x=".5" y=".5" width="9" height="9" fill="none" stroke="#e0e0e0"/><path d="M7.200 2.200v5.600L2.500 5z" fill="#e0e0e0"/></svg>
<div class="abs" style="left:691px;top:108px;width:45px;height:23px;background:#1f1f1f;border-radius:4px"></div>
<svg class="abs" style="left:706px;top:112px" width="16" height="15" viewBox="0 0 16 15"><path d="M1 7C1 5.800 2.500 5.500 3.500 6.200L4.800 6.500 5.300 2.300C6 3.500 6.800 4.300 7.500 4.500H11C12.200 4.200 13.200 3 13.800 1.800 14.400 4 14.400 7 13.500 9.500L12.300 10.900 14.500 13.300 13.600 14.200 10.600 11.800C8.500 12.500 6 11.800 4.500 10.300 3 9.800 1.200 8.500 1 7z" fill="#e2e2e2"/><rect x="6.100" y="6.100" width="1.500" height="2" fill="#222"/><rect x="9.300" y="6.100" width="1.600" height="2" fill="#222"/><path d="M6.300 9.900l3.400.5M10.300 9l.3 2" stroke="#444" stroke-width=".7"/></svg>
<div class="abs" style="left:753px;top:113px;width:13px;height:13px;background:#a2a2a2;border:1px solid #cdcdcd"></div>
<div class="abs" style="left:759px;top:114px;width:1px;height:11px;background:#cdcdcd"></div><div class="abs" style="left:754px;top:119px;width:11px;height:1px;background:#cdcdcd"></div>
<span class="t" style="left:754.33px;top:106.70px;font-size:6px;color:#d6d6d6;font-weight:bold;">C</span>
<span class="t" style="left:760.00px;top:106.70px;font-size:6px;color:#d6d6d6;font-weight:bold;">M</span>
<span class="t" style="left:754.50px;top:112.50px;font-size:6px;color:#d6d6d6;font-weight:bold;">Y</span>
<span class="t" style="left:760.33px;top:112.50px;font-size:6px;color:#d6d6d6;font-weight:bold;">K</span>
<svg class="abs" style="left:798px;top:112px" width="15" height="15" viewBox="0 0 15 15"><circle cx="7.500" cy="7.500" r="6" fill="#7a7a7a" stroke="#c8c8c8" stroke-width="1.200"/><path d="M4 7c1-1.500 2.500-1.500 3.500 0s2.500 1.500 3.500 0" stroke="#c8c8c8" fill="none" stroke-width=".9"/><path d="M4 9c1-1.500 2.500-1.500 3.500 0s2.500 1.500 3.500 0" stroke="#c8c8c8" fill="none" stroke-width=".9"/></svg>
<svg class="abs" style="left:844px;top:112px" width="15" height="15" viewBox="0 0 15 15"><circle cx="7.500" cy="7.500" r="6.300" fill="none" stroke="#c8c8c8" stroke-width="1.200"/><path d="M4.500 2.500v10l8.300-5z" fill="#6a6a6a" stroke="#c8c8c8" stroke-width="1.100" stroke-linejoin="round"/></svg>
<svg class="abs" style="left:890px;top:112px" width="15" height="15" viewBox="0 0 15 15"><path d="M3 2.200C5 .7 9 1.100 11.500 2.900 14 4.900 14.500 8.500 13 11 11.500 13.500 8 14.500 5.600 13.800 4 13.300 4 11.500 4.800 10 5.500 8.600 5 7.600 3.800 7.100 2 6.400 1.500 3.300 3 2.200z" fill="#e2e2e2"/><ellipse cx="5.900" cy="3.400" rx="1.400" ry=".85" fill="#3a3a3a"/><circle cx="10.800" cy="6.100" r="1" fill="#3a3a3a"/><circle cx="10.300" cy="9.400" r="1" fill="#3a3a3a"/><circle cx="6.400" cy="11.300" r="1" fill="#3a3a3a"/></svg>
<svg class="abs" style="left:937px;top:111.2px" width="15" height="15" viewBox="0 0 15 15"><rect x="1.700" y="3.900" width="11.800" height="7.300" fill="none" stroke="#d6d6d6" stroke-width="1.300"/><path d="M6 3.300l1.600-1.700 1.600 1.700" stroke="#d6d6d6" stroke-width="1" fill="none"/><rect x="3.400" y="12.100" width="8.400" height="1.200" fill="#a0a0a0"/><path d="M3.600 12.100l-.9 2.800M11.600 12.100l.9 2.800" stroke="#d6d6d6" stroke-width="1.100" fill="none"/></svg>
<div class="abs" style="left:693px;top:135px;width:233px;height:191px;background:linear-gradient(to bottom,rgba(0,0,0,0),#000),linear-gradient(to right,#fff,#f00)"></div>
<div class="abs" style="left:692px;top:135px;width:1px;height:191px;background:#2c2c2c"></div>
<div class="abs" style="left:693px;top:275px;width:233px;height:1px;background:#d2d2d2"></div>
<div class="abs" style="left:692px;top:276px;width:234px;height:1px;background:#1c1c1c"></div>
<div class="abs" style="left:693px;top:277px;width:233px;height:1px;background:#c6c6c6"></div>
<div class="abs" style="left:693px;top:135px;width:1px;height:141px;background:rgba(255,255,255,.75)"></div>
<div class="abs" style="left:693px;top:277px;width:1px;height:49px;background:#c4c4c4"></div>
<div class="abs" style="left:932px;top:135px;width:15.400px;height:191px;background:linear-gradient(to bottom,#f00 0%,#f0f 15.500%,#00f 33%,#0ff 50.500%,#0f0 68.500%,#ff0 83.300%,#f00 100%)"></div>
<div class="abs" style="left:932px;top:325px;width:15.400px;height:1px;background:#f0d0d0"></div>
<div class="abs" style="left:932px;top:135px;width:15.400px;height:1px;background:#111"></div>
<div class="abs" style="left:952px;top:134px;width:17px;height:25px;background:#272727;border-radius:4px;border:1px solid #232323"></div>
<span class="t" style="left:956.33px;top:136.50px;font-size:11px;color:#cacaca;">R</span>
<div class="abs" style="left:952px;top:161px;width:17px;height:25px;background:#272727;border-radius:4px;border:1px solid #232323"></div>
<span class="t" style="left:956.02px;top:163.50px;font-size:11px;color:#cacaca;">G</span>
<div class="abs" style="left:952px;top:188px;width:17px;height:25px;background:#272727;border-radius:4px;border:1px solid #232323"></div>
<span class="t" style="left:956.63px;top:190.50px;font-size:11px;color:#cacaca;">B</span>
<div class="abs" style="left:952px;top:219px;width:17px;height:25px;background:#272727;border-radius:4px;border:1px solid #232323"></div>
<span class="t" style="left:957.24px;top:221.50px;font-size:11px;color:#cacaca;">L</span>
<div class="abs" style="left:952px;top:246px;width:17px;height:25px;background:#272727;border-radius:4px;border:1px solid #232323"></div>
<span class="t" style="left:956.33px;top:248.50px;font-size:11px;color:#cacaca;">C</span>
<div class="abs" style="left:952px;top:273px;width:17px;height:25px;background:#272727;border-radius:4px;border:1px solid #232323"></div>
<span class="t" style="left:957.24px;top:275.50px;font-size:11px;color:#cacaca;">h</span>
<div class="abs" style="left:707px;top:344px;width:74px;height:16px;background:#fff;border:1px solid #111"></div>
<div class="abs" style="left:691px;top:330px;width:74px;height:16px;background:#414141;border:1px solid #111;box-shadow:inset 0 0 0 1px #f0f0f0"></div>
<svg class="abs" style="left:769px;top:331px" width="12" height="12" viewBox="0 0 12 12"><path d="M3.500 0L0 3l3.500 3V4h4v4.500h-2L8.700 12 12 8.500h-2V2H3.500z" fill="#e0e0e0"/></svg>
<div class="abs" style="left:696px;top:353px;width:7px;height:7px;background:#fff;border:1px solid #ccc"></div>
<div class="abs" style="left:691px;top:348px;width:7px;height:7px;background:#000;border:1px solid #ccc"></div>
<div class="abs" style="left:787px;top:330px;width:30px;height:30px;background:#282828;border:1px solid #202020;border-radius:4px"></div>
<svg class="abs" style="left:791px;top:335px" width="22" height="22" viewBox="0 0 22 22"><rect x="1.500" y="5.700" width="19.200" height="11.400" rx="1.800" fill="none" stroke="#dcdcdc" stroke-width="1.400"/><rect x="4.600" y="8.900" width="13.400" height="5.400" fill="#6c6c6c"/><path d="M5.200 18.100h11.600l.7 1.900H4.500z" fill="#dcdcdc"/><path d="M18.900 1.700L16.300 5M15.200 6.200L10.700 11.800" stroke="#282828" stroke-width="4.800" stroke-linecap="round"/><path d="M18.900 1.800L16.400 5" stroke="#ececec" stroke-width="3.400" stroke-linecap="round"/><path d="M14.500 4.100l2.700 2.500" stroke="#ececec" stroke-width="1.500"/><path d="M15.300 6L11.200 11.300" stroke="#ececec" stroke-width="2.300"/><path d="M11.500 10.800l-1.300 1.900" stroke="#ececec" stroke-width="1.200" stroke-linecap="round"/></svg>
<div class="abs" style="left:824.500px;top:336px;width:143px;height:17px;background:#202020"></div>
<span class="t" style="left:826.80px;top:335.00px;font-size:11.5px;color:#e0e0e0;transform:scaleX(0.9433);transform-origin:0 50%;">414141</span>
<div class="abs" style="left:691.5px;top:361.3px;width:43.3px;height:19px;background:#2c2c2c;border:1px solid #212121;border-radius:4px"></div>
<div class="abs" style="left:695.8px;top:366.0px;width:34.9px;height:10px;background:#3c3c3c"></div>
<div class="abs" style="left:737.4px;top:361.3px;width:43.5px;height:19px;background:#2c2c2c;border:1px solid #212121;border-radius:4px"></div>
<div class="abs" style="left:741.7px;top:366.0px;width:35.1px;height:10px;background:#242424"></div>
<div class="abs" style="left:783.5px;top:361.3px;width:44px;height:19px;background:#2c2c2c;border:1px solid #212121;border-radius:4px"></div>
<div class="abs" style="left:787.8px;top:366.0px;width:35.6px;height:10px;background:#ffffff"></div>
<div class="abs" style="left:830.2px;top:361.3px;width:44.4px;height:19px;background:#2c2c2c;border:1px solid #212121;border-radius:4px"></div>
<svg class="abs" style="left:834.5px;top:366.0px" width="36.0" height="10" viewBox="0 0 35 10" preserveAspectRatio="none"><rect x="0.0" y="0.0" width="3.400" height="3.400" fill="#636363"/><rect x="0.0" y="3.4" width="3.400" height="3.400" fill="#969696"/><rect x="0.0" y="6.8" width="3.400" height="3.400" fill="#636363"/><rect x="3.4" y="0.0" width="3.400" height="3.400" fill="#969696"/><rect x="3.4" y="3.4" width="3.400" height="3.400" fill="#636363"/><rect x="3.4" y="6.8" width="3.400" height="3.400" fill="#969696"/><rect x="6.8" y="0.0" width="3.400" height="3.400" fill="#636363"/><rect x="6.8" y="3.4" width="3.400" height="3.400" fill="#969696"/><rect x="6.8" y="6.8" width="3.400" height="3.400" fill="#636363"/><rect x="10.2" y="0.0" width="3.400" height="3.400" fill="#969696"/><rect x="10.2" y="3.4" width="3.400" height="3.400" fill="#636363"/><rect x="10.2" y="6.8" width="3.400" height="3.400" fill="#969696"/><rect x="13.6" y="0.0" width="3.400" height="3.400" fill="#636363"/><rect x="13.6" y="3.4" width="3.400" height="3.400" fill="#969696"/><rect x="13.6" y="6.8" width="3.400" height="3.400" fill="#636363"/><rect x="17.0" y="0.0" width="3.400" height="3.400" fill="#969696"/><rect x="17.0" y="3.4" width="3.400" height="3.400" fill="#636363"/><rect x="17.0" y="6.8" width="3.400" height="3.400" fill="#969696"/><rect x="20.4" y="0.0" width="3.400" height="3.400" fill="#636363"/><rect x="20.4" y="3.4" width="3.400" height="3.400" fill="#969696"/><rect x="20.4" y="6.8" width="3.400" height="3.400" fill="#636363"/><rect x="23.8" y="0.0" width="3.400" height="3.400" fill="#969696"/><rect x="23.8" y="3.4" width="3.400" height="3.400" fill="#636363"/><rect x="23.8" y="6.8" width="3.400" height="3.400" fill="#969696"/><rect x="27.2" y="0.0" width="3.400" height="3.400" fill="#636363"/><rect x="27.2" y="3.4" width="3.400" height="3.400" fill="#969696"/><rect x="27.2" y="6.8" width="3.400" height="3.400" fill="#636363"/><rect x="30.6" y="0.0" width="3.400" height="3.400" fill="#969696"/><rect x="30.6" y="3.4" width="3.400" height="3.400" fill="#636363"/><rect x="30.6" y="6.8" width="3.400" height="3.400" fill="#969696"/><rect x="34.0" y="0.0" width="3.400" height="3.400" fill="#636363"/><rect x="34.0" y="3.4" width="3.400" height="3.400" fill="#969696"/><rect x="34.0" y="6.8" width="3.400" height="3.400" fill="#636363"/><path d="M0 0H35L0 10z" fill="#ffffff"/></svg>
<div class="abs" style="left:877.3px;top:361.3px;width:44.3px;height:19px;background:#2c2c2c;border:1px solid #212121;border-radius:4px"></div>
<div class="abs" style="left:881.6px;top:366.0px;width:35.9px;height:10px;background:#02001e"></div>
<div class="abs" style="left:924.2px;top:361.3px;width:44.3px;height:19px;background:#2c2c2c;border:1px solid #212121;border-radius:4px"></div>
<div class="abs" style="left:928.5px;top:366.0px;width:35.9px;height:10px;background:#02001e"></div>
<div class="abs" style="left:691.5px;top:383.5px;width:43.3px;height:19px;background:#2c2c2c;border:1px solid #212121;border-radius:4px"></div>
<div class="abs" style="left:695.8px;top:388.2px;width:34.9px;height:10px;background:#0a0000"></div>
<div class="abs" style="left:737.4px;top:383.5px;width:43.5px;height:19px;background:#2c2c2c;border:1px solid #212121;border-radius:4px"></div>
<div class="abs" style="left:741.7px;top:388.2px;width:35.1px;height:10px;background:#e9501f"></div>
<div class="abs" style="left:783.5px;top:383.5px;width:44px;height:19px;background:#2c2c2c;border:1px solid #212121;border-radius:4px"></div>
<div class="abs" style="left:787.8px;top:388.2px;width:35.6px;height:10px;background:#ffff00"></div>
<div class="abs" style="left:830.2px;top:383.5px;width:44.4px;height:19px;background:#2c2c2c;border:1px solid #212121;border-radius:4px"></div>
<svg class="abs" style="left:834.5px;top:388.2px" width="36.0" height="10" viewBox="0 0 35 10" preserveAspectRatio="none"><rect x="0.0" y="0.0" width="3.400" height="3.400" fill="#636363"/><rect x="0.0" y="3.4" width="3.400" height="3.400" fill="#969696"/><rect x="0.0" y="6.8" width="3.400" height="3.400" fill="#636363"/><rect x="3.4" y="0.0" width="3.400" height="3.400" fill="#969696"/><rect x="3.4" y="3.4" width="3.400" height="3.400" fill="#636363"/><rect x="3.4" y="6.8" width="3.400" height="3.400" fill="#969696"/><rect x="6.8" y="0.0" width="3.400" height="3.400" fill="#636363"/><rect x="6.8" y="3.4" width="3.400" height="3.400" fill="#969696"/><rect x="6.8" y="6.8" width="3.400" height="3.400" fill="#636363"/><rect x="10.2" y="0.0" width="3.400" height="3.400" fill="#969696"/><rect x="10.2" y="3.4" width="3.400" height="3.400" fill="#636363"/><rect x="10.2" y="6.8" width="3.400" height="3.400" fill="#969696"/><rect x="13.6" y="0.0" width="3.400" height="3.400" fill="#636363"/><rect x="13.6" y="3.4" width="3.400" height="3.400" fill="#969696"/><rect x="13.6" y="6.8" width="3.400" height="3.400" fill="#636363"/><rect x="17.0" y="0.0" width="3.400" height="3.400" fill="#969696"/><rect x="17.0" y="3.4" width="3.400" height="3.400" fill="#636363"/><rect x="17.0" y="6.8" width="3.400" height="3.400" fill="#969696"/><rect x="20.4" y="0.0" width="3.400" height="3.400" fill="#636363"/><rect x="20.4" y="3.4" width="3.400" height="3.400" fill="#969696"/><rect x="20.4" y="6.8" width="3.400" height="3.400" fill="#636363"/><rect x="23.8" y="0.0" width="3.400" height="3.400" fill="#969696"/><rect x="23.8" y="3.4" width="3.400" height="3.400" fill="#636363"/><rect x="23.8" y="6.8" width="3.400" height="3.400" fill="#969696"/><rect x="27.2" y="0.0" width="3.400" height="3.400" fill="#636363"/><rect x="27.2" y="3.4" width="3.400" height="3.400" fill="#969696"/><rect x="27.2" y="6.8" width="3.400" height="3.400" fill="#636363"/><rect x="30.6" y="0.0" width="3.400" height="3.400" fill="#969696"/><rect x="30.6" y="3.4" width="3.400" height="3.400" fill="#636363"/><rect x="30.6" y="6.8" width="3.400" height="3.400" fill="#969696"/><rect x="34.0" y="0.0" width="3.400" height="3.400" fill="#636363"/><rect x="34.0" y="3.4" width="3.400" height="3.400" fill="#969696"/><rect x="34.0" y="6.8" width="3.400" height="3.400" fill="#636363"/><path d="M0 0H35L0 10z" fill="#ffff00"/></svg>
<div class="abs" style="left:877.3px;top:383.5px;width:44.3px;height:19px;background:#2c2c2c;border:1px solid #212121;border-radius:4px"></div>
<div class="abs" style="left:881.6px;top:388.2px;width:35.9px;height:10px;background:#008eff"></div>
<div class="abs" style="left:924.2px;top:383.5px;width:44.3px;height:19px;background:#2c2c2c;border:1px solid #212121;border-radius:4px"></div>
<div class="abs" style="left:928.5px;top:388.2px;width:35.9px;height:10px;background:#1e1e1e"></div>
<div class="abs" style="left:689px;top:404px;width:283px;height:1px;background:#484848"></div>
<div class="abs" style="left:689px;top:405px;width:283px;height:25px;background:#2f2f2f"></div>
<div class="abs" style="left:689px;top:429px;width:283px;height:1px;background:#545454"></div>
<div class="abs" style="left:821px;top:406px;width:4px;height:2px;background:#8c8c8c"></div>
<div class="abs" style="left:828px;top:406px;width:4px;height:2px;background:#8c8c8c"></div>
<div class="abs" style="left:835px;top:406px;width:4px;height:2px;background:#8c8c8c"></div>
<div class="abs" style="left:689px;top:409px;width:47px;height:21px;background:#3a3a3a;border-top:1px solid #525252;border-right:1px solid #525252"></div>
<div class="abs" style="left:736px;top:411px;width:60px;height:18px;background:#292929;border:1px solid #3a3a3a;border-bottom:none;border-left:none"></div>
<div class="abs" style="left:796px;top:411px;width:64px;height:18px;background:#292929;border:1px solid #3a3a3a;border-bottom:none;border-left:none"></div>
<svg class="abs" style="left:690px;top:413px" width="15" height="15" viewBox="0 0 15 15"><path d="M3 1.500h11l-2.500 2.800h-11zM3 6h11l-2.500 2.800h-11zM3 10.500h11l-2.500 2.800h-11z" fill="#e0e0e0"/></svg>
<span class="t" style="left:705.60px;top:410.50px;font-size:12.5px;color:#ececec;transform:scaleX(0.8060);transform-origin:0 50%;">Слои</span>
<svg class="abs" style="left:737px;top:414px" width="13" height="13" viewBox="0 0 13 13"><rect x=".6" y=".6" width="11.800" height="11.800" fill="none" stroke="#d8d8d8" stroke-width="1.200"/><path d="M3.500 2.500v8M6.500 2.500v8M9.500 2.500v8" stroke="#d8d8d8" stroke-width="1.200"/></svg>
<span class="t" style="left:751.50px;top:410.50px;font-size:12.5px;color:#ececec;transform:scaleX(0.8678);transform-origin:0 50%;">Каналы</span>
<svg class="abs" style="left:797px;top:414px" width="14" height="13" viewBox="0 0 14 13"><rect x="0" y="2" width="3" height="3" fill="#d8d8d8"/><rect x="11" y="2" width="3" height="3" fill="#d8d8d8"/><path d="M2 4h10" stroke="#d8d8d8" stroke-width="1"/><path d="M1.500 11.500C2.500 7 4.500 5.500 7 5.500s4.500 1.500 5.500 6" fill="none" stroke="#d8d8d8" stroke-width="1.800"/><rect x="5.500" y="2.500" width="3" height="3" fill="#d8d8d8"/></svg>
<span class="t" style="left:811.60px;top:410.50px;font-size:12.5px;color:#ececec;transform:scaleX(0.8869);transform-origin:0 50%;">Контуры</span>
<svg class="abs" style="left:957px;top:415px" width="10" height="10" viewBox="0 0 10 10"><rect x=".5" y=".5" width="9" height="9" fill="none" stroke="#e0e0e0"/><path d="M7.200 2.200v5.600L2.500 5z" fill="#e0e0e0"/></svg>
<div class="abs" style="left:691px;top:433px;width:234px;height:28.500px;background:#2b2b2b;border:1px solid #1c1c1c;border-radius:4px"></div>
<span class="t" style="left:697.20px;top:438.00px;font-size:12px;color:#eaeaea;transform:scaleX(0.9055);transform-origin:0 50%;">Режим</span>
<span class="t" style="left:833.40px;top:438.00px;font-size:12px;color:#eaeaea;transform:scaleX(0.9009);transform-origin:0 50%;">Нормальный</span>
<svg class="abs" style="left:905px;top:442px" width="14" height="10" viewBox="0 0 14 10"><path d="M1.500 2.500l5.500 5 5.500-5" stroke="#e6e6e6" stroke-width="1.600" fill="none"/></svg>
<div class="abs" style="left:926.500px;top:433px;width:42.500px;height:28.500px;background:#2b2b2b;border:1px solid #1c1c1c;border-radius:4px"></div>
<svg class="abs" style="left:929.300px;top:441px" width="15" height="15" viewBox="0 0 15 15"><path d="M5.200 4.400A4.400 4.400 0 1 1 7.750 10.830" fill="none" stroke="#e4e4e4" stroke-width="1.600"/><path d="M1.200 5.400L6.900 3.200 6 8.100z" fill="#e4e4e4"/><circle cx="4.500" cy="11" r="1.800" fill="#e4e4e4"/></svg>
<svg class="abs" style="left:949px;top:442px" width="14" height="10" viewBox="0 0 14 10"><path d="M1.500 2.500l5.500 5 5.500-5" stroke="#e6e6e6" stroke-width="1.600" fill="none"/></svg>
<div class="abs" style="left:691px;top:463px;width:278px;height:17px;background:#575757;border:1px solid #7a7a7a"></div>
<span class="t" style="left:692.20px;top:461.50px;font-size:12px;color:#ececec;transform:scaleX(0.9083);transform-origin:0 50%;">Непрозрачность</span>
<span class="t" style="left:929.00px;top:461.50px;font-size:11px;color:#e6e6e6;transform:scaleX(0.9082);transform-origin:0 50%;">100,0</span>
<div class="abs" style="left:956px;top:464px;width:12px;height:15px;background:#3a3a3a"></div>
<div class="abs" style="left:956px;top:464px;width:1px;height:15px;background:#0c0c0c"></div>
<svg class="abs" style="left:957px;top:464px" width="11" height="15" viewBox="0 0 11 15"><path d="M2.200 6l3.300-3 3.300 3" stroke="#747474" stroke-width="1.400" fill="none"/><path d="M2.200 9l3.300 3 3.300-3" stroke="#e4e4e4" stroke-width="1.900" fill="none"/></svg>
<span class="t" style="left:690.30px;top:482.50px;font-size:12px;color:#e4e4e4;transform:scaleX(0.9411);transform-origin:0 50%;">Блокировка:</span>
<svg class="abs" style="left:762.500px;top:487.200px;overflow:visible" width="12.200" height="12.200" viewBox="0 0 16 16"><path d="M16.300 -1.200L5.700 8l3.400 3.400z" fill="#e6e6e6"/><path d="M5.800 9.300c-2.600.3-2.800 3-5.300 5.200 3 1 7.400.2 8-3z" fill="#e2e2e2"/></svg>
<svg class="abs" style="left:786px;top:486px" width="13" height="13" viewBox="0 0 16 16"><path d="M8 0l3 3.200H9v3.800h3.800V5L16 8l-3.200 3V9H9v3.800h2L8 16l-3-3.200h2V9H3.200v2L0 8l3.200-3v2H7V3.200H5z" fill="#e0e0e0"/></svg>
<svg class="abs" style="left:810px;top:486px" width="13" height="13" viewBox="0 0 13 13"><rect x="0.00" y="0.00" width="3.250" height="3.250" fill="#e2e2e2"/><rect x="0.00" y="3.25" width="3.250" height="3.250" fill="#868686"/><rect x="0.00" y="6.50" width="3.250" height="3.250" fill="#e2e2e2"/><rect x="0.00" y="9.75" width="3.250" height="3.250" fill="#868686"/><rect x="3.25" y="0.00" width="3.250" height="3.250" fill="#868686"/><rect x="3.25" y="3.25" width="3.250" height="3.250" fill="#e2e2e2"/><rect x="3.25" y="6.50" width="3.250" height="3.250" fill="#868686"/><rect x="3.25" y="9.75" width="3.250" height="3.250" fill="#e2e2e2"/><rect x="6.50" y="0.00" width="3.250" height="3.250" fill="#e2e2e2"/><rect x="6.50" y="3.25" width="3.250" height="3.250" fill="#868686"/><rect x="6.50" y="6.50" width="3.250" height="3.250" fill="#e2e2e2"/><rect x="6.50" y="9.75" width="3.250" height="3.250" fill="#868686"/><rect x="9.75" y="0.00" width="3.250" height="3.250" fill="#868686"/><rect x="9.75" y="3.25" width="3.250" height="3.250" fill="#e2e2e2"/><rect x="9.75" y="6.50" width="3.250" height="3.250" fill="#868686"/><rect x="9.75" y="9.75" width="3.250" height="3.250" fill="#e2e2e2"/></svg>
<div class="abs" style="left:691px;top:505px;width:278px;height:303px;background:#313131"></div>
<div class="abs" style="left:692px;top:505px;width:276px;height:1px;background:#3a3a3a"></div>
<div class="abs" style="left:692px;top:506px;width:27px;height:21px;background:#4a4a4a"></div>
<div class="abs" style="left:721px;top:506px;width:26.500px;height:21px;background:#4a4a4a"></div>
<div class="abs" style="left:749px;top:506px;width:219px;height:21px;background:#4a4a4a"></div>
<div class="abs" style="left:719px;top:506px;width:2px;height:21px;background:#3c3c3c"></div>
<div class="abs" style="left:747.500px;top:506px;width:1.500px;height:21px;background:#3c3c3c"></div>
<svg class="abs" style="left:699.1px;top:513.0px" width="12.8" height="7.7" viewBox="0 0 20 12"><path d="M1 6.200C3.500 2.300 6.500 1 10 1s6.500 1.300 9 5.200C16.500 9.800 13.500 11 10 11S3.500 9.800 1 6.200z" fill="none" stroke="#e6e6e6" stroke-width="2" stroke-linejoin="round"/><circle cx="10" cy="5.900" r="3.400" fill="#e6e6e6"/><circle cx="8.800" cy="4.700" r=".75" fill="#4a4a4a"/></svg>
<svg class="abs" style="left:729px;top:509px" width="10" height="15" viewBox="0 0 10 15"><rect x="1.900" y="1.600" width="5.600" height="5.800" rx="1" fill="none" stroke="#e4e4e4" stroke-width="1.500"/><path d="M4.700 6.500v3.500" stroke="#e4e4e4" stroke-width="1.600"/><path d="M1.200 13.600h1.400v-2.200c0-.8.500-1.200 1.300-1.200h1.600c.8 0 1.300.4 1.300 1.200v2.200h1.400" fill="none" stroke="#e4e4e4" stroke-width="1.500"/></svg>
<div class="abs" style="left:692px;top:528px;width:276px;height:32px;background:#1f1f1f"></div>
<div class="abs" style="left:692px;top:528px;width:28px;height:32px;background:#555"></div>
<svg class="abs" style="left:696.3px;top:538.5px" width="19.4" height="11.6" viewBox="0 0 20 12"><path d="M1 6.200C3.500 2.300 6.500 1 10 1s6.500 1.300 9 5.200C16.500 9.800 13.500 11 10 11S3.500 9.800 1 6.200z" fill="none" stroke="#e6e6e6" stroke-width="2" stroke-linejoin="round"/><circle cx="10" cy="5.900" r="3.400" fill="#e6e6e6"/><circle cx="8.800" cy="4.700" r=".75" fill="#555"/></svg>
<svg class="abs" style="left:767px;top:530px" width="36" height="28" viewBox="0 0 36 28"><rect x="0" y="0" width="36" height="28" rx="1" fill="#fff"/><g transform="translate(2,2)"><rect x="0" y="0" width="4" height="4" fill="#979797"/><rect x="0" y="4" width="4" height="4" fill="#676767"/><rect x="0" y="8" width="4" height="4" fill="#979797"/><rect x="0" y="12" width="4" height="4" fill="#676767"/><rect x="0" y="16" width="4" height="4" fill="#979797"/><rect x="0" y="20" width="4" height="4" fill="#676767"/><rect x="4" y="0" width="4" height="4" fill="#676767"/><rect x="4" y="4" width="4" height="4" fill="#979797"/><rect x="4" y="8" width="4" height="4" fill="#676767"/><rect x="4" y="12" width="4" height="4" fill="#979797"/><rect x="4" y="16" width="4" height="4" fill="#676767"/><rect x="4" y="20" width="4" height="4" fill="#979797"/><rect x="8" y="0" width="4" height="4" fill="#979797"/><rect x="8" y="4" width="4" height="4" fill="#676767"/><rect x="8" y="8" width="4" height="4" fill="#979797"/><rect x="8" y="12" width="4" height="4" fill="#676767"/><rect x="8" y="16" width="4" height="4" fill="#979797"/><rect x="8" y="20" width="4" height="4" fill="#676767"/><rect x="12" y="0" width="4" height="4" fill="#676767"/><rect x="12" y="4" width="4" height="4" fill="#979797"/><rect x="12" y="8" width="4" height="4" fill="#676767"/><rect x="12" y="12" width="4" height="4" fill="#979797"/><rect x="12" y="16" width="4" height="4" fill="#676767"/><rect x="12" y="20" width="4" height="4" fill="#979797"/><rect x="16" y="0" width="4" height="4" fill="#979797"/><rect x="16" y="4" width="4" height="4" fill="#676767"/><rect x="16" y="8" width="4" height="4" fill="#979797"/><rect x="16" y="12" width="4" height="4" fill="#676767"/><rect x="16" y="16" width="4" height="4" fill="#979797"/><rect x="16" y="20" width="4" height="4" fill="#676767"/><rect x="20" y="0" width="4" height="4" fill="#676767"/><rect x="20" y="4" width="4" height="4" fill="#979797"/><rect x="20" y="8" width="4" height="4" fill="#676767"/><rect x="20" y="12" width="4" height="4" fill="#979797"/><rect x="20" y="16" width="4" height="4" fill="#676767"/><rect x="20" y="20" width="4" height="4" fill="#979797"/><rect x="24" y="0" width="4" height="4" fill="#979797"/><rect x="24" y="4" width="4" height="4" fill="#676767"/><rect x="24" y="8" width="4" height="4" fill="#979797"/><rect x="24" y="12" width="4" height="4" fill="#676767"/><rect x="24" y="16" width="4" height="4" fill="#979797"/><rect x="24" y="20" width="4" height="4" fill="#676767"/><rect x="28" y="0" width="4" height="4" fill="#676767"/><rect x="28" y="4" width="4" height="4" fill="#979797"/><rect x="28" y="8" width="4" height="4" fill="#676767"/><rect x="28" y="12" width="4" height="4" fill="#979797"/><rect x="28" y="16" width="4" height="4" fill="#676767"/><rect x="28" y="20" width="4" height="4" fill="#979797"/></g><path d="M7 12.500l2-1.800 3.500 4 2-1 2.500-2.800 2 .3 1.800-1.700 1.500 1.500" stroke="#4c4c4c" stroke-width="2" fill="none" opacity=".8"/></svg>
<span class="t" style="left:808px;top:533.500px;font-size:11.500px;color:#ececec;font-family:'Liberation Serif',serif">1</span>
<svg class="abs" style="left:696.3px;top:570.5px" width="19.4" height="11.6" viewBox="0 0 20 12"><path d="M1 6.200C3.500 2.300 6.500 1 10 1s6.500 1.300 9 5.200C16.500 9.800 13.500 11 10 11S3.500 9.800 1 6.200z" fill="none" stroke="#e6e6e6" stroke-width="2" stroke-linejoin="round"/><circle cx="10" cy="5.900" r="3.400" fill="#e6e6e6"/><circle cx="8.800" cy="4.700" r=".75" fill="#313131"/></svg>
<div class="abs" style="left:767px;top:562px;width:36px;height:28px;background:linear-gradient(90deg,#747474,#2a2a2a);border:2px solid #000"></div>
<span class="t" style="left:806.800px;top:565.500px;font-size:12.500px;color:#dadada;font-weight:bold;font-family:'Liberation Serif',serif;letter-spacing:.4px">Фон</span>
<svg class="abs" style="left:700.0px;top:812.3px" width="14" height="14" viewBox="0 0 14 14"><path d="M3.500 3.500h6l2.500 2.500v7h-8.500z" fill="none" stroke="#e0e0e0" stroke-width="1.300"/><path d="M3 0v6M0 3h6" stroke="#e0e0e0" stroke-width="1.500"/></svg>
<svg class="abs" style="left:734.0px;top:812.3px" width="14" height="14" viewBox="0 0 14 14"><path d="M1 2h4.500l1.200 1.500H13V13H1z" fill="#e0e0e0"/><path d="M7.500 5.800v5.400M4.800 8.500h5.400" stroke="#3a3a3a" stroke-width="1.600"/></svg>
<svg class="abs" style="left:768.5px;top:812.3px" width="14" height="14" viewBox="0 0 14 14"><path d="M1.500 9.500L7 4l5.500 5.500" stroke="#e0e0e0" stroke-width="1.700" fill="none"/></svg>
<svg class="abs" style="left:802.5px;top:812.3px" width="14" height="14" viewBox="0 0 14 14"><path d="M1.500 4.500L7 10l5.500-5.500" stroke="#e0e0e0" stroke-width="1.700" fill="none"/></svg>
<svg class="abs" style="left:836.0px;top:812.3px" width="14" height="14" viewBox="0 0 14 14"><rect x="1.700" y="2.700" width="7.500" height="6" fill="none" stroke="#e0e0e0" stroke-width="1.300"/><path d="M11.500 6v6h-6.500v-1.500" fill="none" stroke="#e0e0e0" stroke-width="1.300" opacity=".8"/></svg>
<svg class="abs" style="left:870.5px;top:812.3px" width="14" height="14" viewBox="0 0 14 14"><path d="M1.500 2.500h6l-1 2h-6zM1.500 6h6l-1 2h-6zM1.500 9.500h6l-1 2h-6z" fill="#e0e0e0"/><path d="M10.800 2v9M8.500 8.800l2.300 2.800 2.300-2.800" stroke="#e0e0e0" stroke-width="1.400" fill="none"/></svg>
<svg class="abs" style="left:904.0px;top:812.3px" width="14" height="14" viewBox="0 0 14 14"><path d="M3.200 .6h7.600v4.400c0 2.200-1.600 3.600-3.800 3.600s-3.800-1.400-3.800-3.600z" fill="#e0e0e0"/><path d="M4.600 2.600l1.800.9M9.400 2.600l-1.800.9" stroke="#3a3a3a" stroke-width="1"/><path d="M5.200 5.300h3.600L7 7z" fill="#3a3a3a"/><path d="M3.500 8h10.800l-2.600 5h-11z" fill="#e0e0e0"/></svg>
<svg class="abs" style="left:941.5px;top:812.3px" width="14" height="14" viewBox="0 0 14 14"><rect x=".4" y=".4" width="13.200" height="13.200" rx="1" fill="#e0e0e0"/><path d="M2.900 2.900l8.200 8.200M11.100 2.900l-8.200 8.200" stroke="#2a2a2a" stroke-width="2.400"/></svg>
<div class="abs" style="left:65px;top:833px;width:621px;height:1px;background:#585858"></div>
<div class="abs" style="left:688px;top:833px;width:284px;height:1px;background:#585858"></div>
<div class="abs" style="left:700px;top:83px;width:272px;height:751px;border-right:1px solid #585858;border-bottom:1px solid #585858;border-bottom-right-radius:7px"></div>
</div></div>
<div style="position:absolute;left:17px;top:56px;width:956px;height:779px;border:1px solid rgba(255,255,255,.17);border-top:none;border-bottom-color:rgba(255,255,255,.06);border-radius:0 0 8px 8px;pointer-events:none"></div>
</body></html>
